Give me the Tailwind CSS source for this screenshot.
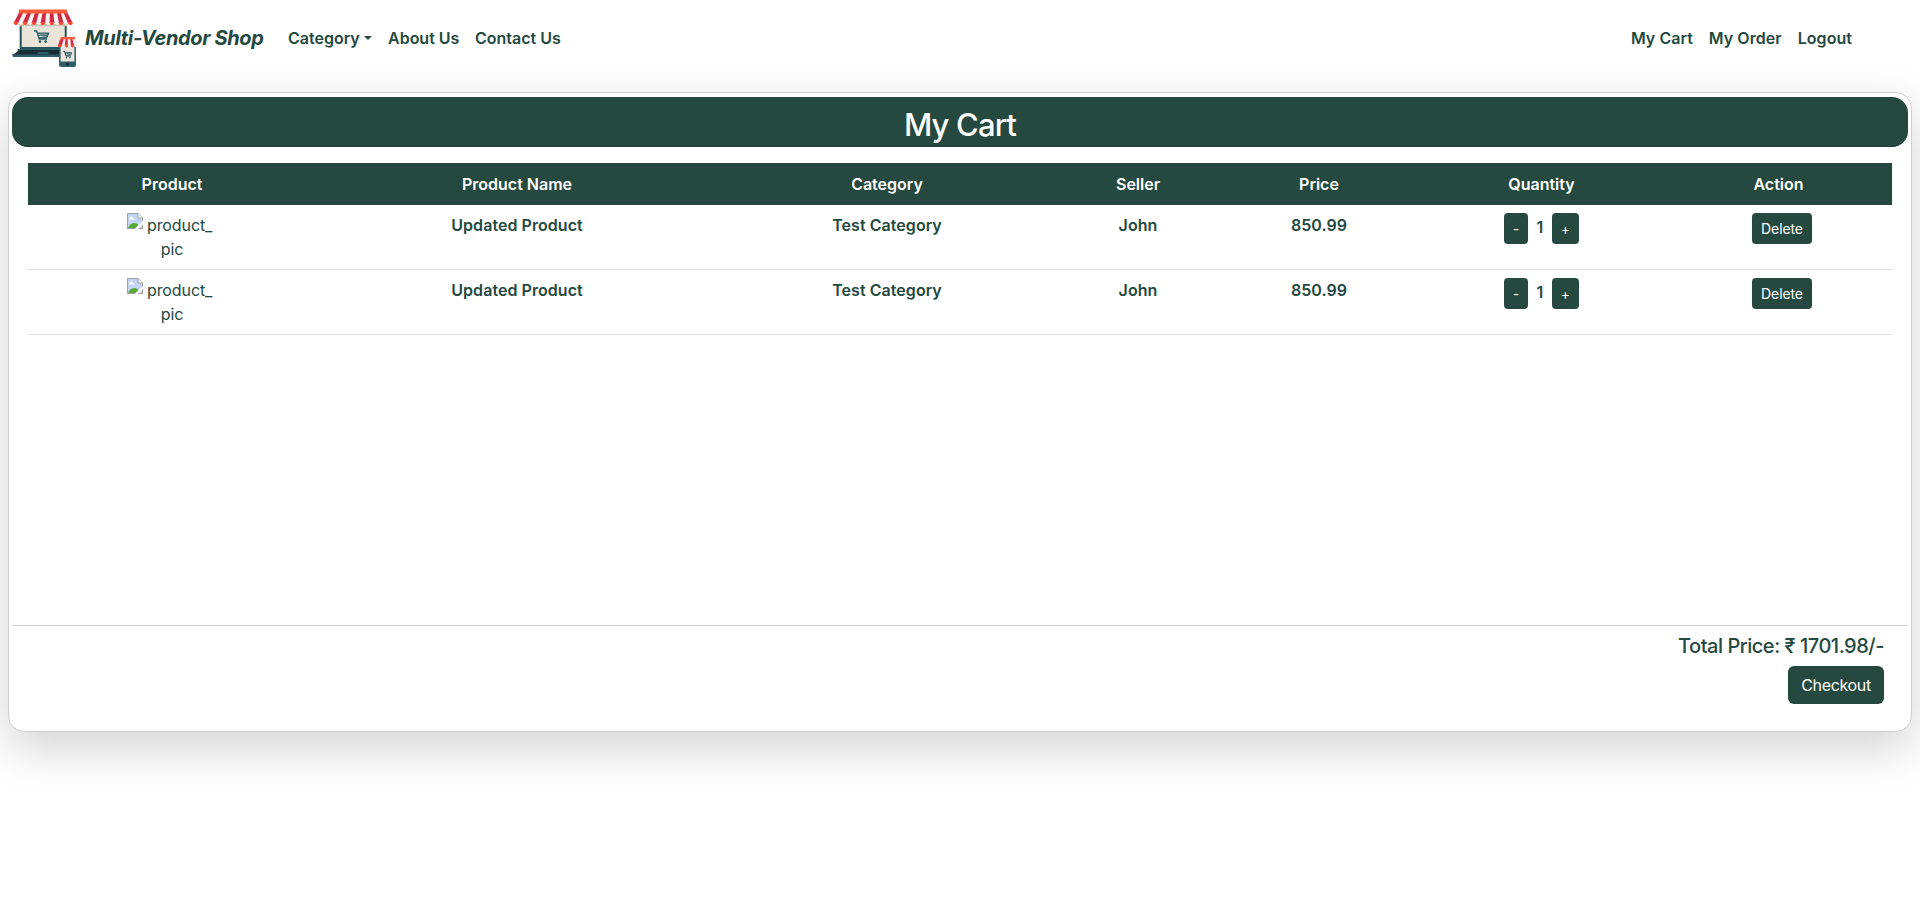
<!DOCTYPE html>
<html lang="en">
<head>
<meta charset="utf-8">
<title>Multi-Vendor Shop</title>
<script src="https://cdn.jsdelivr.net/npm/@tailwindcss/browser@4"></script>
</head>
<body class="h-[916px] overflow-hidden bg-white font-['Inter','Liberation_Sans',sans-serif] text-base text-[#25493f]">
<svg class="hidden">
  <symbol id="broken" viewBox="0 0 16 16">
    <path d="M.5.5h10.500l4.500 4.500v10.500H.5z" fill="#c3d6f5"/>
    <path d="M2 6.500h5.500q0-1.600-1.500-1.600-.4-1.700-1.900-1.500-1.200.2-1.200 1.700Q2 5.300 2 6.500z" fill="#fff"/>
    <path d="M1 15q2-4.800 6-5 3-.1 4.500 2L8.500 15z" fill="#56a935"/>
    <path d="M.5 16V.5H11l4.500 4.500v11M0 15.500h16" fill="none" stroke="#a0a0a0"/>
    <path d="M11 .8v4.200h4.300" fill="#fff" stroke="#a0a0a0"/>
    <path d="M16 7.800 7.800 16h3.400L16 11.200z" fill="#fff"/>
  </symbol>
  <symbol id="cart" viewBox="0 0 16 14">
    <path d="M0 1h3l2.500 8.500h8M3.600 3.200H15L13.200 8H5.200z" fill="#8fa3a5" stroke="#2d5d68" stroke-width="1.300"/>
    <path d="M4 5.500h10" stroke="#2d5d68"/>
    <circle cx="6.300" cy="12" r="1.400" fill="#2d5d68"/><circle cx="12" cy="12" r="1.400" fill="#2d5d68"/>
  </symbol>
</svg>
<nav class="flex h-[76px] items-center pl-3 pr-[68px] font-semibold">
  <svg class="h-[60px] w-[66px] shrink-0" viewBox="12.500 8 64.500 60" preserveAspectRatio="none">
    <path d="M20 24h46v27H20z" fill="#28545e"/>
    <path d="M22 24h42v23H22z" fill="#ebe5d9"/>
    <path d="M18 49h42v3H18z" fill="#2d5d68"/>
    <path d="M20 50h40v5H13z" fill="#152f36"/>
    <path d="M12.500 54.500H60V57H14.500q-2 0-2-2.500z" fill="#2d5d68"/>
    <path d="M38 52h10v2H37z" fill="#2d5d68"/>
    <path d="M19 24h48v1.500q-1.500 2-3 0-1.500 2-3 0-1.500 2-3 0-1.500 2-3 0-1.500 2-3 0-1.500 2-3 0-1.500 2-3 0-1.500 2-3 0-1.500 2-3 0-1.500 2-3 0-1.500 2-3 0-1.500 2-3 0-1.500 2-3 0-1.500 2-3 0-1.500 2-3 0-1.500 2-3 0z" fill="#cbc0b0"/>
    <path d="M19 12.500h47.500l5.200 10.500q-2.100 3.500-4.200 0-2.200 4-4.400 0-2.200 4-4.400 0-2.200 4-4.400 0-2.200 4-4.400 0-2.200 4-4.400 0-2.200 4-4.400 0-2.200 4-4.400 0-2.200 4-4.400 0-2.200 4-4.400 0-2.200 4-4.400 0-2.200 4-4.400 0-2.100 3.500-4.300 0z" fill="#f8f3ef"/>
    <path d="M19.500 12.500h4L18.500 23q-2.200 3-4.400 0zM27.500 12.500h3.800L27.400 23q-2.200 3.600-4.500 0zM35 12.500h3.700L36.200 23q-2.200 3.600-4.500 0zM42.400 12.500h3.400L45 23q-2.200 3.600-4.500 0zM49.500 12.500H53l.8 10.500q-2.200 3.600-4.500 0zM56.500 12.500h3.600L62.800 23q-2.200 3.600-4.400 0zM62.800 12.500h3.700L71.700 23q-2.200 3.600-4.500 0z" fill="#cf2a43"/>
    <path d="M14 22h4.800q-.3 3-2.500 3T14 22zM23 22h4.600q-.2 3-2.400 3T23 22zM31.800 22h4.500q0 3-2.300 3t-2.200-3zM40.500 22H45q0 3-2.300 3t-2.200-3zM49.300 22h4.500q0 3-2.300 3t-2.200-3zM58 22h4.600q.4 3-2 3T58 22zM66.800 22h4.700q.8 3-1.700 3t-3-3z" fill="#ff4a38"/>
    <path d="M19.300 9.500h46.900v4H19z" fill="#ff5a3c"/>
    <use href="#cart" x="33.500" y="30" width="16" height="13.500"/>
    <rect x="58.500" y="40" width="16.500" height="27" rx="2" fill="#2d5d68"/>
    <path d="M60 45h13.500v16.500H60z" fill="#ebe5d9"/>
    <circle cx="66.800" cy="64" r="1.500" fill="#152f36"/>
    <path d="M60.500 38h13l3.200 7.500q-1.600 3-3.600.5-2 2.500-4 0-2 2.500-4 0-2 2.500-4 0-2.500 2.500-3.800-.5z" fill="#f8f3ef"/>
    <path d="M60.500 38h2.600l-2 8q-2.400 2.500-3.800-.5zM65 38h2v9q-2.300 0-3-1.500zM69.500 38h1.800l2 8q-2 2-3.200 0z" fill="#cf2a43"/>
    <path d="M57.600 44.500h3.700q-.4 3-2.200 3t-1.500-3zM64.200 44.500h3q0 3-1.500 3t-1.500-3zM69.800 44.500h3.200q.4 3-1.200 3t-2-3z" fill="#ff4a38"/>
    <path d="M60.300 37h13.400l.8 2.200H59.600z" fill="#ff5a3c"/>
    <use href="#cart" x="62" y="50.500" width="9.500" height="8.500"/>
  </svg>
  <span class="ml-[7px] w-[203px] whitespace-nowrap text-xl font-bold italic tracking-[-0.33px]">Multi-Vendor Shop</span>
  <span class="flex w-[100px] items-center gap-1">Category<i class="mt-[-1px] border-x-[4.500px] border-t-[4.500px] border-x-transparent"></i></span>
  <span class="w-[87px]">About Us</span>
  <span>Contact Us</span>
  <div class="ml-auto flex gap-4 tracking-[0.050px]"><span>My Cart</span><span>My Order</span><span>Logout</span></div>
</nav>
<main class="mx-2 mt-4 flex h-[640px] flex-col rounded-2xl border border-[#d0d0d0] bg-white px-[3px] pt-1 shadow-[0_16px_48px_rgba(0,0,0,0.175)]">
  <h1 class="h-[50px] shrink-0 rounded-2xl border-b border-[#1f3f38] bg-[#25493f] pt-1 text-center text-[31px] leading-[48px] font-medium tracking-[-0.85px] text-white">My Cart</h1>
  <div class="h-[478px] shrink-0 px-4 pt-4">
    <table class="w-full table-fixed border-separate border-spacing-0 text-center leading-6 [&_td]:border-b [&_td]:border-[#dee2e6]">
      <colgroup><col class="w-[288px]"><col class="w-[402px]"><col class="w-[338px]"><col class="w-[164px]"><col class="w-[198px]"><col class="w-[247px]"><col class="w-[227px]"></colgroup>
      <thead><tr class="h-[42px] bg-[#25493f] text-white">
        <th class="font-semibold">Product</th><th class="font-semibold">Product Name</th><th class="font-semibold">Category</th><th class="font-semibold">Seller</th><th class="font-semibold">Price</th><th class="font-semibold">Quantity</th><th class="font-semibold">Action</th>
      </tr></thead>
      <tbody class="font-semibold tracking-[0.050px]">
        <tr class="h-[65px] align-top">
          <td class="pt-2 font-normal tracking-[-0.1px]"><div class="mx-auto flex w-[90px]"><svg class="mr-1 h-4 w-4 shrink-0"><use href="#broken"/></svg><span>product_</span></div><div>pic</div></td>
          <td class="pt-2">Updated Product</td><td class="pt-2">Test Category</td><td class="pt-2">John</td><td class="pt-2">850.99</td>
          <td class="pt-2"><div class="flex justify-center gap-2"><button class="h-[31px] w-6 rounded bg-[#25493f] text-sm font-normal text-white">-</button><span class="w-2 pt-0.5">1</span><button class="h-[31px] w-[27px] rounded bg-[#25493f] text-sm font-normal text-white">+</button></div></td>
          <td class="pt-2"><button class="ml-[7px] h-[31px] w-[60px] rounded bg-[#25493f] text-sm font-normal tracking-[-0.1px] text-white">Delete</button></td>
        </tr>
        <tr class="h-[65px] align-top">
          <td class="pt-2 font-normal tracking-[-0.1px]"><div class="mx-auto flex w-[90px]"><svg class="mr-1 h-4 w-4 shrink-0"><use href="#broken"/></svg><span>product_</span></div><div>pic</div></td>
          <td class="pt-2">Updated Product</td><td class="pt-2">Test Category</td><td class="pt-2">John</td><td class="pt-2">850.99</td>
          <td class="pt-2"><div class="flex justify-center gap-2"><button class="h-[31px] w-6 rounded bg-[#25493f] text-sm font-normal text-white">-</button><span class="w-2 pt-0.5">1</span><button class="h-[31px] w-[27px] rounded bg-[#25493f] text-sm font-normal text-white">+</button></div></td>
          <td class="pt-2"><button class="ml-[7px] h-[31px] w-[60px] rounded bg-[#25493f] text-sm font-normal tracking-[-0.1px] text-white">Delete</button></td>
        </tr>
      </tbody>
    </table>
  </div>
  <footer class="flex flex-col items-end border-t border-[#d0d0d0] pr-6 pt-2">
    <p class="text-xl leading-6 font-medium tracking-[-0.48px]">Total Price: ₹ 1701.98/-</p>
    <button class="mt-2 h-[38px] w-24 rounded-md bg-[#25493f] tracking-[-0.35px] text-white">Checkout</button>
  </footer>
</main>
</body>
</html>
